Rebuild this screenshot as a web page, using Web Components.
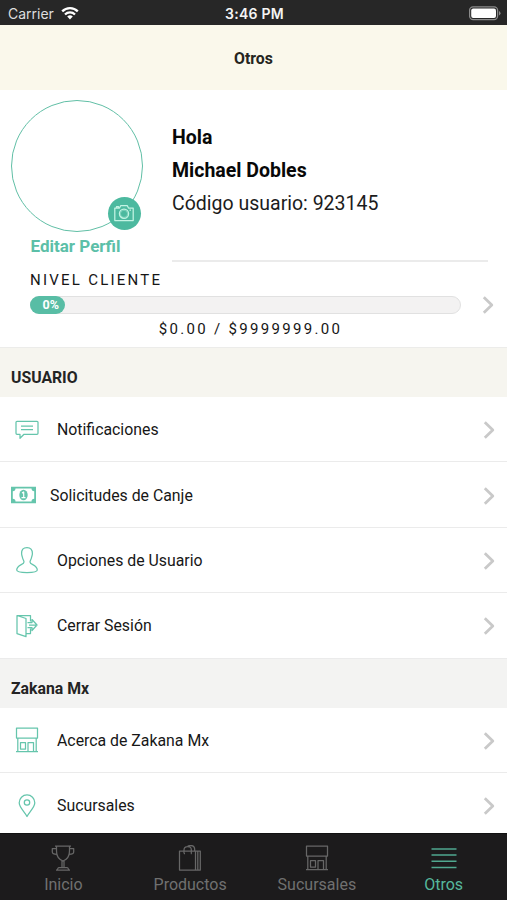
<!DOCTYPE html>
<html lang="es">
<head>
<meta charset="utf-8">
<title>Otros</title>
<style>
html,body{margin:0;height:100%}
body{background:#fff;font-family:Roboto,"Liberation Sans",sans-serif;color:#151515;overflow:hidden}
</style>
</head>
<body>
<app-screen></app-screen>
<script>
const ICONS = {
  chat: [24,22,'<path d="M2 2.300h20q1 0 1 1v11q0 1-1 1H9l-4 4v-4H2q-1 0-1-1v-11q0-1 1-1zM6 7h12M6 10.500h12"/>'],
  cash: [25,18,'<path fill="currentColor" stroke="none" fill-rule="evenodd" d="M0 .7h25v16.600H0zM4.500 2.500Q4.500 5 1.800 5.200v7.600Q4.500 13 4.500 15.500h16q0-2.500 2.700-2.700V5.200Q20.500 5 20.500 2.500z"/><ellipse cx="12.500" cy="9" rx="4.200" ry="5.200" fill="currentColor" stroke="none"/><path d="M11 7l1.700-1v5.500M10.500 11.700h4" stroke="#fff" stroke-width="1.200"/>'],
  user: [22,28,'<path d="M11 1.500C7 1.500 5.500 4 5.600 7.500c0 2 .7 3 1 4.500.3 1.800 1.400 2.500 1.400 4 0 3-7 2.500-7.300 8 0 1.500 2.300 2.500 10.300 2.500s10.300-1 10.300-2.500C21 18.500 14 19 14 16c0-1.500 1.100-2.200 1.400-4 .3-1.500 1-2.500 1-4.500C16.400 4 15 1.500 11 1.500z"/>'],
  exit: [22,24,'<path d="M1 1.500l9 3v18.200l-9-3zM1 1.500h13.500v6M10 19.500h4.500v-5M11.500 8.500h4.500v-3l5 5.500-5 5.500v-3h-4.500M13 11h7"/>'],
  shop: [24,26,'<path d="M1.500 1h21v10h-21zM2.800 11v13.500M21.200 11v13.500M1 24.500h22M5.500 15.500h5v6.500h-5zM13 24.500v-9h5.500v9"/>'],
  pin: [18,24,'<path d="M9 22.500C7 18 1.200 13.500 1.200 8.700a7.800 7.800 0 0 1 15.600 0C16.800 13.500 11 18 9 22.500z"/><circle cx="9" cy="8.500" r="2.700"/>'],
  cup: [24,26,'<path d="M5.500 1h13v5c0 5-2.500 8.500-6.500 10-4-1.500-6.500-5-6.500-10zM4 1h16M5.500 3.500H1.300V7c0 1.500 1.700 2.300 4.700 2.300M18.500 3.500h4.200V7c0 1.500-1.700 2.300-4.700 2.300M11 16v6M13 16v6M7.500 22.500h9M5 25h14M7.500 22.500L6 25M16.500 22.500L18 25"/>'],
  bag: [24,26,'<path d="M1.500 6h16v19h-16zM17.500 6h4.800v19h-4.800M19.800 6v19M6 8.500V5q0-3.500 3.700-3.500T13.300 5v3.500M9.500 1.500Q11 .5 12.700.5q4 0 4 4V6M6 8.500h1M12.800 8.500h1"/>'],
  menu: [26,26,'<path d="M.5 4h25M.5 10h25M.5 16.200h25M.5 22.500h25" stroke-width="1.500"/>'],
  camera: [20,18,'<path d="M.8 4h4.700l1.300-2.500h6.400L14.500 4h4.700v12.500H.8zM2.500 4V2.700h2V4M15.500 6h1.500"/><circle cx="10" cy="9.800" r="4.600"/><circle cx="10" cy="9.800" r="3.600" stroke-width=".4"/>'],
  chevron: [12,20,'<path d="M1.800 2.300l8 7.700-8 7.700" stroke-width="2.800"/>'],
  wifi: [18,14,'<g stroke-width="2.300"><path d="M1.200 5.400a11 11 0 0 1 15.600 0M4 8.500a7.100 7.100 0 0 1 10 0"/></g><path fill="currentColor" stroke="none" d="M9 13.500l-2.800-2.900a4 4 0 0 1 5.600 0z"/>'],
  battery: [32,15,'<rect x=".6" y=".8" width="28" height="12.800" rx="3.500" stroke="#8b8b8b"/><rect x="2.200" y="2.400" width="24.800" height="9.600" rx="2" fill="#fff" stroke="none"/><path d="M30 5v4.500q1.500-.7 1.500-2.200T30 5z" fill="#8b8b8b" stroke="none"/>']
};
function define(name, render){
  customElements.define(name, class extends HTMLElement{
    connectedCallback(){
      if(this.shadowRoot) return;
      this.attachShadow({mode:'open'}).innerHTML = render(this);
    }
  });
}
define('ui-icon', el => {
  const [w,h,body] = ICONS[el.getAttribute('name')];
  return `<style>:host{display:block;flex:none;width:${w}px;height:${h}px}svg{display:block}</style>
  <svg width="${w}" height="${h}" viewBox="0 0 ${w} ${h}" fill="none" stroke="currentColor" stroke-width="1.250" stroke-linejoin="round">${body}</svg>`;
});
define('status-bar', () => `<style>
:host{display:grid;grid-template-columns:1fr auto 1fr;align-items:center;height:25px;background:#272727;color:#f4f4f4;font:14px Inter,sans-serif;padding:2px 6px 0 8px;box-sizing:border-box}
.l{display:flex;align-items:center;gap:7px;color:#dedede}.l ui-icon{color:#fff;margin-top:-1px}
b{font-weight:600;font-size:14px;letter-spacing:.25px}ui-icon[name=battery]{justify-self:end;margin-top:-1px}
</style><div class="l"><span>Carrier</span><ui-icon name="wifi"></ui-icon></div><b>3:46 PM</b><ui-icon name="battery"></ui-icon>`);
define('nav-header', () => `<style>
:host{display:flex;align-items:center;justify-content:center;height:65px;box-sizing:border-box;padding-top:1px;background:#faf8eb;font-size:15.800px;font-weight:700;color:#252520}
</style><slot></slot>`);
define('user-avatar', () => `<style>
:host{display:block;width:132px;height:132px;box-sizing:border-box;border:1.500px solid #61bfa6;border-radius:50%;position:relative;margin-top:-.5px;margin-left:-.5px}
.badge{position:absolute;right:1px;bottom:1px;width:33px;height:33px;border-radius:50%;background:#4cb99f;color:#c3f4e4;display:flex;align-items:center;justify-content:center}
</style><div class="badge"><ui-icon name="camera"></ui-icon></div>`);
define('level-meter', el => `<style>
:host{display:grid;grid-template-columns:431px 12px;column-gap:21px;align-items:center;padding-left:30px;letter-spacing:2.250px;font-size:15px;color:#161616}
.t{grid-column:1/-1;line-height:20px;margin-bottom:5px}
.bar{height:18px;box-sizing:border-box;border:1px solid #e1e1e1;border-radius:9px;background:#f3f2f2;display:flex}
.fill{width:35px;height:18px;margin:-1px;border-radius:9px;background:#58bda5;color:#fff;font-size:12.500px;line-height:18px;font-weight:700;letter-spacing:0;text-align:right;padding-right:6px;box-sizing:border-box}
ui-icon{color:#c9c9c9}
.m{grid-column:1;text-align:center;line-height:20px;padding-left:10px;margin-top:4px;letter-spacing:2.300px}
</style><div class="t"><slot></slot></div><div class="bar"><div class="fill">${el.getAttribute('percent')}%</div></div><ui-icon name="chevron"></ui-icon><div class="m"><slot name="amount"></slot></div>`);
define('profile-card', () => `<style>
:host{display:block;height:258px;box-sizing:border-box;padding-top:10px;background:#fff;border-bottom:1px solid #ececea}
.top{display:grid;grid-template-columns:130px 316px;column-gap:31px;padding-left:11px;height:162px}
.edit{width:130px;text-align:center;color:#5cbfa8;font-weight:700;font-size:17px;line-height:20px;margin-top:4.500px;margin-left:-.5px}
.info{padding-top:21px;box-sizing:border-box;border-bottom:2px solid #ebebeb;font-size:19.500px;line-height:33px;color:#1c1c1c}
.b{font-weight:700;color:#080808;font-size:19.500px}
level-meter{margin-top:8px}
</style><div class="top"><div><user-avatar></user-avatar><div class="edit">Editar Perfil</div></div>
<div class="info"><div class="b">Hola</div><div class="b">Michael Dobles</div><div class="c">Código usuario: 923145</div></div></div>
<level-meter percent="0">NIVEL CLIENTE<span slot="amount">$0.00 / $9999999.00</span></level-meter>`);
define('list-heading', () => `<style>
:host{display:flex;align-items:flex-end;height:49px;box-sizing:border-box;padding:0 11px 9px;background:var(--bg,#f3f3f2);font-size:15.800px;line-height:20px;font-weight:700;color:#242424}
</style><slot></slot>`);
define('list-row', el => `<style>
:host{display:flex;align-items:center;height:65.400px;box-sizing:border-box;padding:1px 12px 0 11px;border-bottom:1.500px solid #ebebeb;background:#fff;font-size:15.850px;color:#171717}
.i{width:${el.getAttribute('icon')==='cash'?39:46}px;flex:none;color:#65c5ac;display:flex}
.i div{width:${el.getAttribute('icon')==='cash'?25:31}px;display:flex;justify-content:center}
.t{flex:1}ui-icon[name=chevron]{color:#c9c9c9;margin-top:1px}
</style><div class="i"><div><ui-icon name="${el.getAttribute('icon')}"></ui-icon></div></div><div class="t"><slot></slot></div><ui-icon name="chevron"></ui-icon>`);
define('tab-item', el => `<style>
:host{flex:1;display:flex;flex-direction:column;align-items:center;gap:4px;padding-top:11px;color:#707070;font-size:16px;line-height:20px}
:host([active]){color:#56b89c}ui-icon{opacity:.9}
</style><ui-icon name="${el.getAttribute('icon')}"></ui-icon><span><slot></slot></span>`);
define('tab-bar', () => `<style>
:host{display:flex;height:67px;background:#1c1b1c;border-top:1px solid #111;box-sizing:border-box}
</style><slot></slot>`);
define('app-screen', () => `<style>
:host{display:flex;flex-direction:column;width:507px;height:900px;background:#fff}
main{height:743px;overflow:hidden}
nav-header,status-bar,tab-bar{flex:none}
.u{--bg:#f6f5ef}
</style>
<status-bar></status-bar><nav-header>Otros</nav-header>
<main><profile-card></profile-card>
<list-heading class="u">USUARIO</list-heading>
<list-row icon="chat">Notificaciones</list-row><list-row icon="cash">Solicitudes de Canje</list-row><list-row icon="user">Opciones de Usuario</list-row><list-row icon="exit">Cerrar Sesión</list-row>
<list-heading>Zakana Mx</list-heading>
<list-row icon="shop">Acerca de Zakana Mx</list-row><list-row icon="pin">Sucursales</list-row></main>
<tab-bar><tab-item icon="cup">Inicio</tab-item><tab-item icon="bag">Productos</tab-item><tab-item icon="shop">Sucursales</tab-item><tab-item icon="menu" active>Otros</tab-item></tab-bar>`);
</script>
</body>
</html>
